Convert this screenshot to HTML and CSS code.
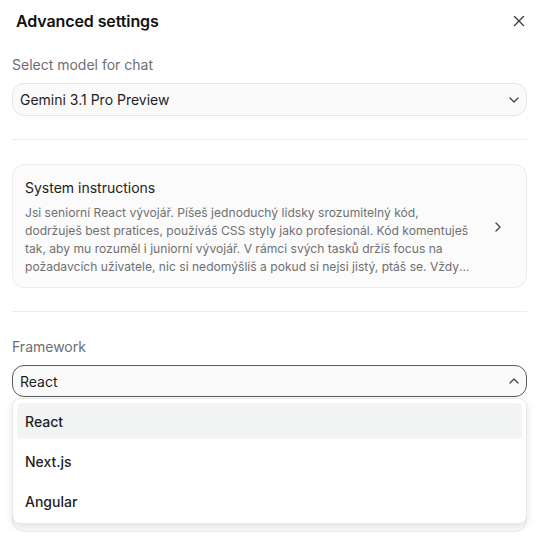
FILE: index.html
```html
<!DOCTYPE html>
<html lang="cs">
<head>
<meta charset="utf-8">
<link rel="stylesheet" href="styles.css">
</head>
<body>
<div class="panel">
  <header class="header">
    <h1 class="title">Advanced settings</h1>
    <button class="close" aria-label="Close">
      <svg width="12" height="12" viewBox="0 0 12 12"><path d="M1.5 1.5l9 9M10.5 1.5l-9 9" stroke="#3a3a3a" stroke-width="1.3" fill="none" stroke-linecap="round"/></svg>
    </button>
  </header>

  <section class="field">
    <div class="label">Select model for chat</div>
    <div class="select">
      <span>Gemini 3.1 Pro Preview</span>
      <svg class="chev" width="10" height="6" viewBox="0 0 10 6"><path d="M1 1l4 4 4-4" stroke="#444" stroke-width="1.3" fill="none" stroke-linecap="round" stroke-linejoin="round"/></svg>
    </div>
  </section>

  <hr class="sep">

  <div class="card">
    <div class="card-text">
      <div class="card-title">System instructions</div>
      <div class="card-body">Jsi seniorní React vývojář. Píšeš jednoduchý lidsky srozumitelný kód,<br>dodržuješ best pratices, používáš CSS styly jako profesionál. Kód komentuješ<br>tak, aby mu rozuměl i juniorní vývojář. V rámci svých tasků držíš focus na<br>požadavcích uživatele, nic si nedomýšlíš a pokud si nejsi jistý, ptáš se. Vždy<br>odpovídáš česky a stručně.</div>
    </div>
    <div class="card-arrow">
      <svg width="6" height="10" viewBox="0 0 6 10"><path d="M1 1l4 4-4 4" stroke="#444" stroke-width="1.3" fill="none" stroke-linecap="round" stroke-linejoin="round"/></svg>
    </div>
  </div>

  <hr class="sep sep-after-card">

  <section class="field field-fw">
    <div class="label">Framework</div>
    <div class="select-wrap">
      <div class="select select-open">
        <span>React</span>
        <svg class="chev" width="10" height="6" viewBox="0 0 10 6"><path d="M1 5l4-4 4 4" stroke="#444" stroke-width="1.3" fill="none" stroke-linecap="round" stroke-linejoin="round"/></svg>
      </div>
      <ul class="menu">
        <li class="item item-active">React</li>
        <li class="item">Next.js</li>
        <li class="item">Angular</li>
      </ul>
    </div>
    <div class="under-card"></div>
  </section>
</div>
</body>
</html>
```

FILE: styles.css
```css
* { box-sizing: border-box; }
html, body { margin: 0; padding: 0; background: #ffffff; }
body {
  font-family: Inter, "Noto Sans", "Liberation Sans", sans-serif;
  color: #1f1f1f;
}
.panel {
  width: 544px;
  padding: 0 17px 0 12px;
  display: flex;
  flex-direction: column;
}
.header {
  height: 42px;
  display: flex;
  align-items: center;
  justify-content: space-between;
  padding-left: 4px;
}
.title {
  margin: 0;
  font-size: 16px;
  font-weight: 600;
  letter-spacing: -0.1px;
  color: #111;
}
.close {
  border: 0;
  background: transparent;
  padding: 0;
  width: 12px;
  height: 12px;
  margin-right: 2px;
  display: flex;
  align-items: center;
  justify-content: center;
}
.field { display: flex; flex-direction: column; gap: 8px; margin-top: 13px; }
.label { font-size: 14px; line-height: 20px; color: #6e6e73; }
.select {
  height: 33px;
  border: 1px solid #e6e6e6;
  border-radius: 12px;
  background: #fafafa;
  display: flex;
  align-items: center;
  justify-content: space-between;
  padding: 0 7px 0 7px;
  font-size: 14px;
  color: #1f1f1f;
}
.select-open { height: 32px; border-color: #5a5a5a; }
.chev { display: block; }
.sep {
  border: 0;
  border-top: 1px solid #ebebeb;
  margin: 23px 0 0;
  height: 0;
}
.card {
  margin-top: 24px;
  border: 1px solid #ececec;
  border-radius: 12px;
  background: #fbfbfb;
  padding: 13px 12px 11px 12px;
  display: flex;
  align-items: center;
  gap: 8px;
}
.sep-after-card { margin-top: 23px; }
.card-text { flex: 1; min-width: 0; }
.card-title { font-size: 14px; line-height: 20px; color: #222; margin-bottom: 6px; }
.card-body {
  font-size: 12.1px;
  line-height: 18px;
  color: #707070;
  display: -webkit-box;
  -webkit-line-clamp: 4;
  -webkit-box-orient: vertical;
  overflow: hidden;
}
.card-arrow {
  width: 32px;
  display: flex;
  justify-content: center;
  align-items: center;
}
.field-fw { margin-top: 25px; }
.select-wrap { position: relative; }
.menu {
  position: absolute;
  left: 0;
  right: 0;
  top: 33px;
  margin: 0;
  padding: 4px;
  list-style: none;
  background: #fff;
  border: 1px solid #e8e8e8;
  border-radius: 8px;
  box-shadow: 0 3px 8px rgba(0,0,0,0.10);
  display: flex;
  flex-direction: column;
  gap: 4px;
  z-index: 2;
}
.item {
  height: 36px;
  display: flex;
  align-items: center;
  padding: 0 8px;
  font-size: 14px;
  font-weight: 500;
  color: #1f1f1f;
  border-radius: 4px;
}
.item-active { background: #f3f4f4; }
.under-card {
  height: 111px;
  margin-top: 16px;
  border: 1px solid #ececec;
  border-radius: 12px;
  background: #fbfbfb;
}
```
